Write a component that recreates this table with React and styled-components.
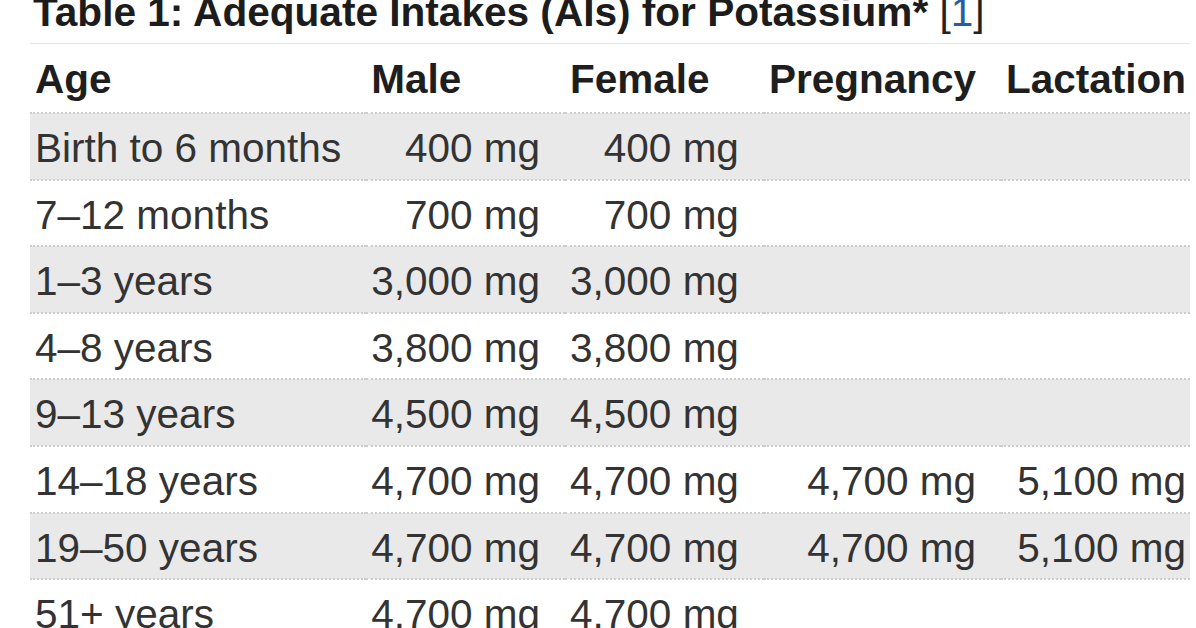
import React from 'react';
import styled, { createGlobalStyle } from 'styled-components';

const GlobalStyle = createGlobalStyle`
    html, body {
        margin: 0;
        padding: 0;
        background: #ffffff;
        overflow: hidden;
    }
    body {
        font-family: "Liberation Sans", Arial, sans-serif;
    }
`;

const Page = styled.div`
    padding-left: 30px;
    width: 1196px;
    height: 628px;
    box-sizing: border-box;
    overflow: hidden;
`;

const TableBlock = styled.div`
    display: inline-block;
`;

const Title = styled.h3`
    margin: -12px 0 0;
    padding: 0 0 7px 3px;
    font-size: 40.6px;
    line-height: 48px;
    font-weight: 700;
    color: #1c1c1c;
    border-bottom: 1px solid #e6e6e6;
    white-space: nowrap;
`;

const Ref = styled.span`
    font-weight: 400;
    color: #222;
`;

const RefLink = styled.a`
    color: #2a5d9f;
    text-decoration: none;
`;

const Table = styled.table`
    border-collapse: collapse;
    font-size: 40.5px;
    line-height: 48px;
    color: #333;
`;

const HeadCell = styled.th`
    text-align: left;
    font-weight: 700;
    color: #1e1e1e;
    padding: 11px 25px 9px 5px;
    white-space: nowrap;
    &:last-child {
        padding-right: 4px;
    }
`;

const Row = styled.tr`
    background: ${({ $shaded }) => ($shaded ? '#e9e9e9' : 'transparent')};
    border-top: 2px dotted #cdcdcd;
`;

const Cell = styled.td`
    text-align: ${({ $num }) => ($num ? 'right' : 'left')};
    padding: 10px 25px 6.6px 5px;
    white-space: nowrap;
    &:last-child {
        padding-right: 4px;
    }
`;

const rows = [
    ['Birth to 6 months', '400 mg', '400 mg', '', ''],
    ['7–12 months', '700 mg', '700 mg', '', ''],
    ['1–3 years', '3,000 mg', '3,000 mg', '', ''],
    ['4–8 years', '3,800 mg', '3,800 mg', '', ''],
    ['9–13 years', '4,500 mg', '4,500 mg', '', ''],
    ['14–18 years', '4,700 mg', '4,700 mg', '4,700 mg', '5,100 mg'],
    ['19–50 years', '4,700 mg', '4,700 mg', '4,700 mg', '5,100 mg'],
    ['51+ years', '4,700 mg', '4,700 mg', '', ''],
];

export default function App() {
    return (
        <Page>
            <GlobalStyle />
            <TableBlock>
                <Title>
                    Table 1: Adequate Intakes (AIs) for Potassium* <Ref>[<RefLink href="#ref1">1</RefLink>]</Ref>
                </Title>
                <Table>
                    <thead>
                        <tr>
                            <HeadCell>Age</HeadCell>
                            <HeadCell>Male</HeadCell>
                            <HeadCell>Female</HeadCell>
                            <HeadCell>Pregnancy</HeadCell>
                            <HeadCell>Lactation</HeadCell>
                        </tr>
                    </thead>
                    <tbody>
                        {rows.map((r, i) => (
                            <Row key={r[0]} $shaded={i % 2 === 0}>
                                <Cell>{r[0]}</Cell>
                                <Cell $num>{r[1]}</Cell>
                                <Cell $num>{r[2]}</Cell>
                                <Cell $num>{r[3]}</Cell>
                                <Cell $num>{r[4]}</Cell>
                            </Row>
                        ))}
                    </tbody>
                </Table>
            </TableBlock>
        </Page>
    );
}
